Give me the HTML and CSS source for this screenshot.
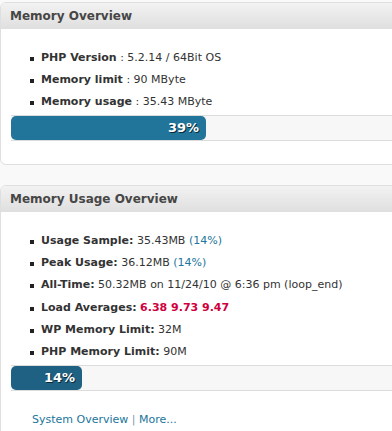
FILE: index.html
```html
<!DOCTYPE html>
<html lang="en">
<head>
    <meta charset="UTF-8">
    <title>Memory Overview</title>
    <link rel="stylesheet" href="styles.css">
</head>
<body>
    <div class="dashboard">
        <!-- Memory Overview -->
        <div class="widget">
            <h3 class="widget-title">Memory Overview</h3>
            <div class="widget-body">
                <ul class="stats">
                    <li><strong>PHP Version</strong> : 5.2.14 / 64Bit OS</li>
                    <li><strong>Memory limit</strong> : 90 MByte</li>
                    <li><strong>Memory usage</strong> : 35.43 MByte</li>
                </ul>
                <div class="progress">
                    <div class="progress-fill" style="width: 195px">39%</div>
                </div>
            </div>
        </div>

        <!-- Memory Usage Overview -->
        <div class="widget">
            <h3 class="widget-title">Memory Usage Overview</h3>
            <div class="widget-body">
                <ul class="stats stats-usage">
                    <li><strong>Usage Sample:</strong> 35.43MB <span class="pct">(14%)</span></li>
                    <li><strong>Peak Usage:</strong> 36.12MB <span class="pct">(14%)</span></li>
                    <li><strong>All-Time:</strong> 50.32MB on 11/24/10 @ 6:36 pm (loop_end)</li>
                    <li><strong>Load Averages:</strong> <span class="load">6.38 9.73 9.47</span></li>
                    <li><strong>WP Memory Limit:</strong> 32M</li>
                    <li><strong>PHP Memory Limit:</strong> 90M</li>
                </ul>
                <div class="progress">
                    <div class="progress-fill dark" style="width: 71px">14%</div>
                </div>
                <p class="links">
                    <a href="#">System Overview</a> <span class="sep">|</span> <a href="#">More...</a>
                </p>
            </div>
        </div>
    </div>
</body>
</html>
```

FILE: styles.css
```css
body {
    margin: 0;
    background-color: #f9f9f9;
    font-family: 'DejaVu Sans', Verdana, sans-serif;
    color: #333;
    overflow: hidden;
}

.dashboard {
    padding-top: 2px;
    width: 430px;
}

.widget {
    background-color: #fff;
    border: 1px solid #dfdfdf;
    border-radius: 6px;
    margin-bottom: 20px;
    overflow: hidden;
}

.widget-title {
    margin: 0;
    height: 26px;
    line-height: 26px;
    padding-left: 9px;
    font-size: 12px;
    font-weight: bold;
    color: #464646;
    background: linear-gradient(to bottom, #f2f2f2, #dfdfdf);
}

.widget-body {
    padding: 18px 0 23px 10px;
}

.stats {
    list-style: none;
    margin: 0 0 2px 0;
    padding: 0 0 0 19px;
    font-size: 11px;
}

.stats li {
    line-height: 22px;
    position: relative;
    padding-left: 11px;
}

.stats li::before {
    content: '';
    position: absolute;
    left: 0;
    top: 10px;
    width: 4px;
    height: 4px;
    background-color: #222;
}

.stats-usage li {
    line-height: 22.2px;
}

.stats-usage {
    margin-bottom: 2px;
}

.pct {
    color: #21759b;
}

.load {
    color: #d00040;
    font-weight: bold;
}

.progress {
    height: 24px;
    border-top: 1px solid #dcdcdc;
    border-bottom: 1px solid #dcdcdc;
    background-color: #f7f7f7;
}

.progress-fill {
    height: 24px;
    line-height: 24px;
    box-sizing: border-box;
    padding-right: 7px;
    text-align: right;
    background-color: #21759b;
    border-radius: 5px;
    color: #fff;
    font-size: 13px;
    font-weight: bold;
    text-shadow: 1px 1px 0 #0b2a38;
}

.progress-fill.dark {
    background-color: #1f6182;
}

.links {
    margin: 22px 0 0 21px;
    font-size: 11px;
    color: #7a9bb0;
}

.links a {
    color: #21759b;
    text-decoration: none;
}
```
